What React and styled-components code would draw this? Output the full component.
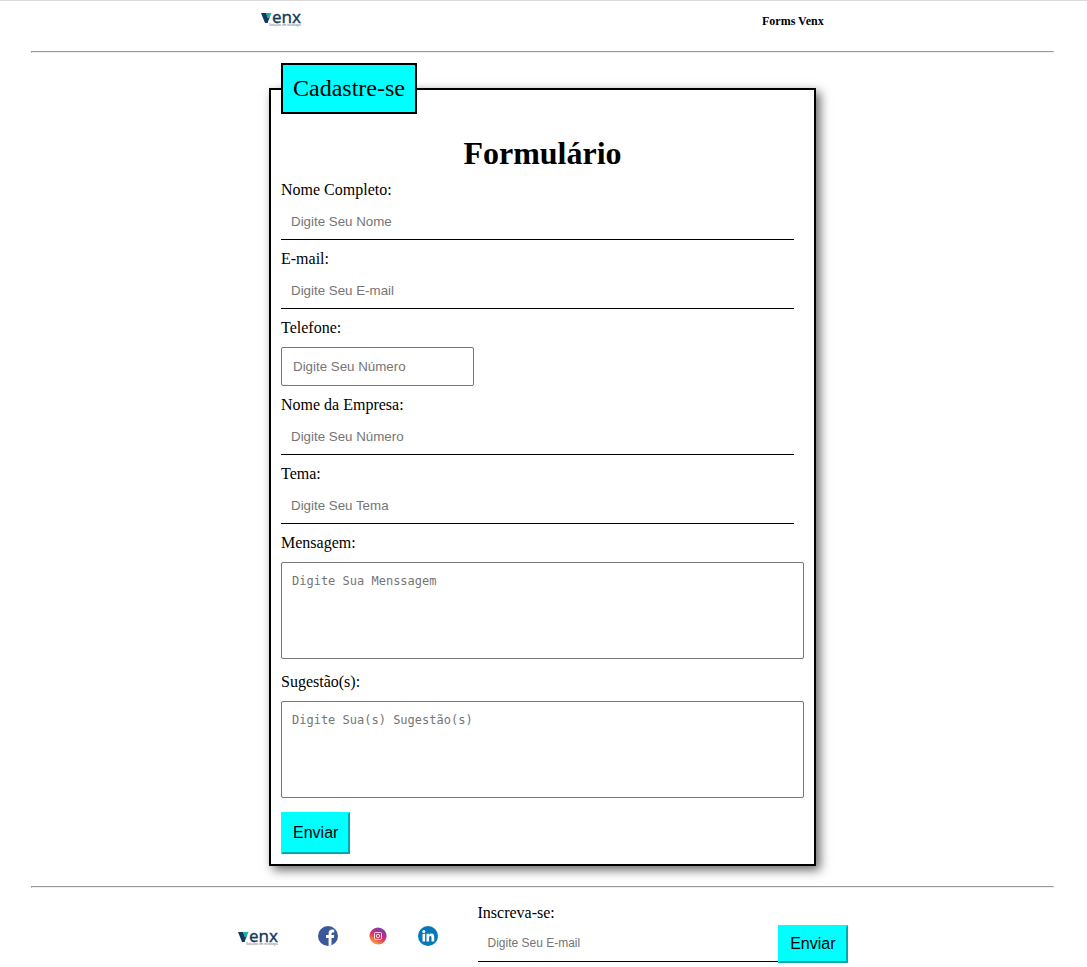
import React from "react";
import styled, { createGlobalStyle } from "styled-components";

const GlobalStyle = createGlobalStyle`
  *, *::before, *::after { box-sizing: border-box; }
  body {
    margin: 0;
    background: #fff;
    color: #000;
    font-family: "Liberation Serif", "Times New Roman", serif;
    font-size: 16px;
    line-height: 18px;
  }
`;

const Page = styled.div`
  border-top: 1px solid #dadada;
  padding: 0 33px 4px 31px;
`;

const Header = styled.header`
  display: flex;
  justify-content: space-around;
  align-items: center;
  height: 40px;
  margin-bottom: 10px;
`;

const HeaderTitle = styled.h1`
  margin: 0;
  font-size: 12px;
  line-height: 14px;
`;

const Divider = styled.hr`
  margin: 0;
  border: 1px solid;
  border-color: #9a9a9a #eee #eee #9a9a9a;
`;

const Main = styled.main`
  display: flex;
  justify-content: center;
  padding: 10px 0 20px;
`;

const Fieldset = styled.fieldset`
  width: 547px;
  max-width: 100%;
  min-width: 0;
  margin: 0;
  padding: 0 10px 10px;
  border: 2px solid #000;
  box-shadow: 4px 4px 10px rgba(0, 0, 0, 0.6);
`;

const Legend = styled.legend`
  padding: 10px;
  border: 2px solid #000;
  background: #0ff;
  font-size: 24px;
  line-height: 27px;
`;

const Title = styled.h2`
  margin: 21px 0 10px;
  text-align: center;
  font-size: 32px;
  line-height: 36px;
`;

const Field = styled.div`
  display: flex;
  flex-direction: column;
  align-items: flex-start;
  gap: ${(p) => (p.$boxed ? 10 : 5)}px;
  margin-bottom: ${(p) => (p.$area ? 14 : 10)}px;
`;

const LineInput = styled.input`
  width: 98%;
  height: 36px;
  padding: 10px;
  border: 0;
  border-bottom: 1px solid #000;
  background: transparent;
  font-family: "Liberation Sans", Arial, sans-serif;
  &::placeholder { color: #757575; }
`;

const BoxInput = styled(LineInput)`
  width: 193px;
  height: 39px;
  padding: 10px 11px;
  border: 1px solid #767676;
  border-radius: 2px;
`;

const TextArea = styled.textarea`
  display: block;
  width: 100%;
  height: 97px;
  padding: 10px;
  border: 1px solid #767676;
  border-radius: 2px;
  resize: none;
  font-family: "DejaVu Sans Mono", Consolas, monospace;
  font-size: 12px;
  line-height: 16px;
  &::placeholder { color: #757575; }
`;

const Button = styled.button`
  display: block;
  flex: none;
  padding: ${(p) => (p.$compact ? 8 : 10)}px 10px;
  border: 2px solid;
  border-color: #0ff #00a9a9 #00a9a9 #0ff;
  background: #0ff;
  color: #000;
  font-family: "Liberation Sans", Arial, sans-serif;
  font-size: 16px;
  line-height: 18px;
`;

const Footer = styled.footer`
  display: flex;
  justify-content: center;
  align-items: center;
  gap: 40px;
  padding-top: 16px;
`;

const Socials = styled.nav`
  display: flex;
  gap: 30px;
`;

const SocialLink = styled.a`
  display: block;
  height: 20px;
  margin-top: 4px;
`;

const Newsletter = styled.form`
  display: flex;
  flex-direction: column;
  gap: 3px;
  width: 370px;
`;

const NewsletterRow = styled.div`
  display: flex;
  align-items: flex-start;
`;

const NewsletterInput = styled(LineInput)`
  flex: 1;
  min-width: 0;
  height: 37px;
  font-size: 12px;
`;

const LogoSvg = styled.svg`
  display: block;
  margin-top: ${(p) => p.$drop || 0}px;
`;

function Logo({ drop }) {
  return (
    <LogoSvg $drop={drop} width="40" height="30" viewBox="0 0 40 30" role="img" aria-label="Venx">
      <path d="M0 7H5L6.500 10.500V17H4Z" fill="#12395b" />
      <path d="M8.800 11L6.500 17H5V12Z" fill="#12395b" />
      <path d="M5 7H10.500L8.500 12H6.800Z" fill="#12b5ab" />
      <text x="11" y="17" fontFamily="Noto Sans, sans-serif" fontSize="17" fill="#12395b" stroke="#12395b" strokeWidth="0.3">enx</text>
      <text x="8" y="20" fontFamily="Liberation Sans, sans-serif" fontSize="3" fill="#65727c">Soluções em tecnologia</text>
    </LogoSvg>
  );
}

function FacebookIcon() {
  return (
    <svg width="20" height="20" viewBox="0 0 20 20" aria-hidden="true">
      <circle cx="10" cy="10" r="10" fill="#3b5998" />
      <path d="M10.6 19.9V12H8V9H10.600V7.200C10.600 4.800 12 3.600 14.100 3.600L16.200 3.800V6.400H14.900C13.700 6.400 13.500 7 13.500 7.800V9H16.200L15.800 12H13.500V19.300Z" fill="#fff" />
    </svg>
  );
}

function InstagramIcon() {
  return (
    <svg width="20" height="20" viewBox="0 0 20 20" aria-hidden="true">
      <defs>
        <linearGradient id="insta" x1="0.2" y1="1" x2="0.75" y2="0">
          <stop offset="0" stopColor="#fdc468" />
          <stop offset="0.2" stopColor="#f5803f" />
          <stop offset="0.45" stopColor="#dc3a62" />
          <stop offset="0.7" stopColor="#b02e88" />
          <stop offset="1" stopColor="#6747b4" />
        </linearGradient>
      </defs>
      <circle cx="10" cy="10" r="8.600" fill="url(#insta)" />
      <g fill="none" stroke="#fff" strokeOpacity="0.8">
        <rect x="6.500" y="6.500" width="7" height="7" rx="1" />
        <circle cx="10" cy="10" r="1.700" />
      </g>
    </svg>
  );
}

function LinkedinIcon() {
  return (
    <svg width="20" height="20" viewBox="0 0 20 20" aria-hidden="true">
      <circle cx="10" cy="10" r="10" fill="#0579b8" />
      <g fill="#fff">
        <circle cx="5.800" cy="5.400" r="1.500" />
        <rect x="4.500" y="7.800" width="2.600" height="7.700" />
        <path d="M8.500 7.800H11V8.900C11.600 8 12.400 7.600 13.500 7.600C15.500 7.600 16.200 9 16.200 11.100V15.500H13.500V11.600C13.500 10.500 13.200 9.900 12.400 9.900C11.500 9.900 11.100 10.600 11.100 11.700V15.500H8.500Z" />
      </g>
    </svg>
  );
}

export default function App() {
  return (
    <>
      <GlobalStyle />
      <Page>
        <Header>
          <Logo />
          <HeaderTitle>Forms Venx</HeaderTitle>
        </Header>
        <Divider />
        <Main>
          <form onSubmit={(e) => e.preventDefault()}>
            <Fieldset>
              <Legend>Cadastre-se</Legend>
              <Title>Formulário</Title>
              <Field>
                <label htmlFor="nome">Nome Completo:</label>
                <LineInput id="nome" type="text" placeholder="Digite Seu Nome" />
              </Field>
              <Field>
                <label htmlFor="email">E-mail:</label>
                <LineInput id="email" type="email" placeholder="Digite Seu E-mail" />
              </Field>
              <Field $boxed>
                <label htmlFor="telefone">Telefone:</label>
                <BoxInput id="telefone" type="tel" placeholder="Digite Seu Número" />
              </Field>
              <Field>
                <label htmlFor="empresa">Nome da Empresa:</label>
                <LineInput id="empresa" type="text" placeholder="Digite Seu Número" />
              </Field>
              <Field>
                <label htmlFor="tema">Tema:</label>
                <LineInput id="tema" type="text" placeholder="Digite Seu Tema" />
              </Field>
              <Field $boxed $area>
                <label htmlFor="mensagem">Mensagem:</label>
                <TextArea id="mensagem" placeholder="Digite Sua Menssagem" />
              </Field>
              <Field $boxed $area>
                <label htmlFor="sugestao">Sugestão(s):</label>
                <TextArea id="sugestao" placeholder="Digite Sua(s) Sugestão(s)" />
              </Field>
              <Button type="submit">Enviar</Button>
            </Fieldset>
          </form>
        </Main>
        <Divider />
        <Footer>
          <Logo drop={12} />
          <Socials aria-label="Redes sociais">
            <SocialLink href="#facebook" aria-label="Facebook"><FacebookIcon /></SocialLink>
            <SocialLink href="#instagram" aria-label="Instagram"><InstagramIcon /></SocialLink>
            <SocialLink href="#linkedin" aria-label="LinkedIn"><LinkedinIcon /></SocialLink>
          </Socials>
          <Newsletter onSubmit={(e) => e.preventDefault()}>
            <label htmlFor="inscricao">Inscreva-se:</label>
            <NewsletterRow>
              <NewsletterInput id="inscricao" type="email" placeholder="Digite Seu E-mail" />
              <Button type="submit" $compact>Enviar</Button>
            </NewsletterRow>
          </Newsletter>
        </Footer>
      </Page>
    </>
  );
}
